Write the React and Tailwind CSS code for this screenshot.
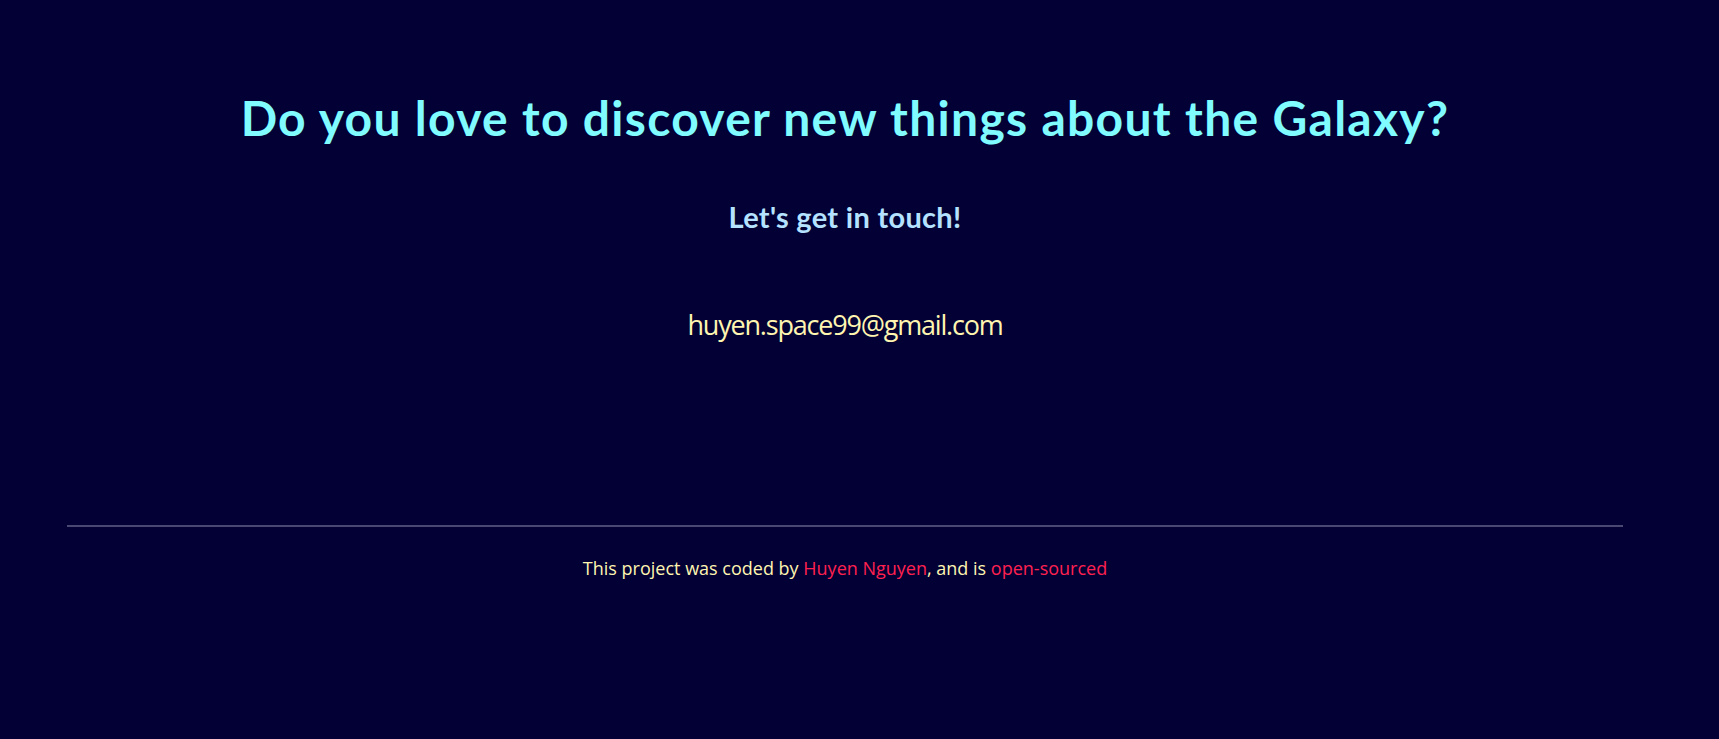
export default function App() {
  return (
    <div className="min-h-[739px] w-full bg-[#020035]">
      <div className="w-[1690px] flex flex-col items-center pt-[88px]">
        <h1 className="text-[48px] leading-[60px] font-bold text-[#80fbff] tracking-[1.3px]" style={{ fontFamily: 'Lato, sans-serif' }}>
          Do you love to discover new things about the Galaxy?
        </h1>
        <h2 className="mt-[52px] text-[29px] leading-[34px] font-bold text-[#b5e2ff] tracking-[0.3px]" style={{ fontFamily: 'Lato, sans-serif' }}>
          Let's get in touch!
        </h2>
        <p className="mt-[72px] text-[27px] leading-[38px] text-[#fff5b0] tracking-[-1.2px]" style={{ fontFamily: '"Open Sans", sans-serif' }}>
          huyen.space99@gmail.com
        </p>
        <div className="mt-[181px] w-[1556px] h-[2px] bg-[#4a4872]" />
        <p className="mt-[28px] text-[18px] leading-[26px] text-[#fff5b0]" style={{ fontFamily: '"Open Sans", sans-serif' }}>
          This project was coded by <span className="text-[#ff2050]">Huyen Nguyen</span>, and is <span className="text-[#ff2050]">open-sourced</span>
        </p>
      </div>
    </div>
  );
}
